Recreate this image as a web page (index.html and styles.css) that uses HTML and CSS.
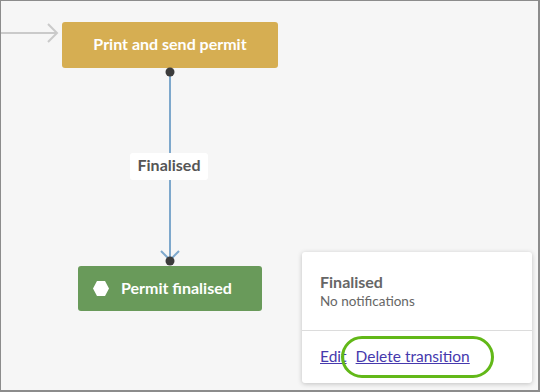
FILE: index.html
```html
<!DOCTYPE html>
<html>
<head>
<meta charset="utf-8">
<link rel="stylesheet" href="styles.css">
</head>
<body>
<div class="canvas">
  <svg class="wires" width="540" height="392" viewBox="0 0 540 392">
    <line x1="0" y1="33" x2="57" y2="33" stroke="#cacaca" stroke-width="2"/>
    <polyline points="48,24 57,33 48,42" fill="none" stroke="#cacaca" stroke-width="2"/>
    <line x1="170" y1="72" x2="170" y2="261" stroke="#7ea8cc" stroke-width="2"/>
    <polyline points="161,251 170,260 179,251" fill="none" stroke="#7ea8cc" stroke-width="2"/>
    <circle cx="170" cy="72" r="4.5" fill="#3c3c3c"/>
    <circle cx="170" cy="261" r="4.5" fill="#3c3c3c"/>
  </svg>

  <div class="node node-task">Print and send permit</div>

  <div class="edge-label">Finalised</div>

  <div class="node node-end">
    <svg class="hex" width="16" height="15" viewBox="0 0 16 15">
      <polygon points="4,0 12,0 16,7.5 12,15 4,15 0,7.5" fill="#fff"/>
    </svg>
    <span>Permit finalised</span>
  </div>

  <div class="panel">
    <div class="panel-head">
      <div class="panel-title">Finalised</div>
      <div class="panel-sub">No notifications</div>
    </div>
    <div class="panel-actions">
      <a href="#" class="link">Edit</a>
      <a href="#" class="link">Delete transition</a>
    </div>
    <div class="highlight"></div>
  </div>
</div>
</body>
</html>
```

FILE: styles.css
```css
* { box-sizing: border-box; }
html, body { margin: 0; padding: 0; }
body {
  font-family: "Lato", "Open Sans", sans-serif;
  background: #f6f6f6;
}
.canvas {
  position: relative;
  width: 540px;
  height: 392px;
  background: #f6f6f6;
  border-top: 1px solid #8c8c8c;
  border-left: 1px solid #8c8c8c;
  border-right: 2px solid #8c8c8c;
  border-bottom: 2px solid #8c8c8c;
  overflow: hidden;
}
.wires {
  position: absolute;
  left: -1px;
  top: -1px;
  z-index: 1;
}
.node {
  position: absolute;
  display: flex;
  align-items: center;
  justify-content: center;
  color: #fff;
  font-weight: 700;
  font-size: 16px;
  border-radius: 3px;
  z-index: 0;
  padding-bottom: 3px;
}
.node-task {
  left: 61px;
  top: 21px;
  width: 216px;
  height: 46px;
  background: #d6ae52;
}
.node-end {
  left: 77px;
  top: 265px;
  width: 184px;
  height: 45px;
  background: #699a5a;
  justify-content: flex-start;
  padding-left: 15px;
  gap: 12px;
}
.hex { display: block; margin-top: 3px; }
.edge-label {
  position: absolute;
  left: 129px;
  top: 152px;
  width: 78px;
  height: 27px;
  background: #fff;
  border-radius: 3px;
  color: #555;
  font-weight: 700;
  font-size: 16px;
  display: flex;
  align-items: center;
  justify-content: center;
  z-index: 2;
  padding-bottom: 4px;
}
.panel {
  position: absolute;
  left: 301px;
  top: 251px;
  width: 230px;
  height: 131px;
  background: #fff;
  border-radius: 3px;
  box-shadow: 0 1px 5px rgba(0,0,0,0.22);
  z-index: 3;
}
.panel-head {
  padding: 20px 18px 0 18px;
  height: 79px;
  border-bottom: 1px solid #dcdcdc;
}
.panel-title {
  font-weight: 700;
  font-size: 16px;
  color: #666;
  line-height: 19px;
}
.panel-sub {
  font-size: 13.5px;
  color: #666;
  line-height: 17px;
  margin-top: 2px;
}
.panel-actions {
  display: flex;
  gap: 9px;
  padding: 16px 18px 0 18px;
  font-size: 15.5px;
  line-height: 19px;
}
.link {
  color: #4639ad;
  text-decoration: underline;
}
.highlight {
  position: absolute;
  left: 39px;
  top: 84px;
  width: 153px;
  height: 42px;
  border: 3px solid #62b818;
  border-radius: 21px;
}
```
